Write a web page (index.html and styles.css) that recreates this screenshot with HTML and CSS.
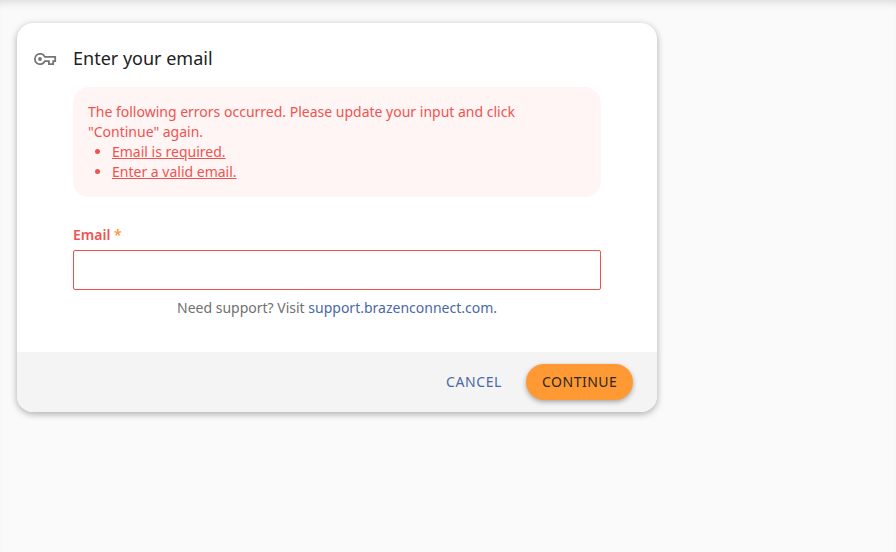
FILE: index.html
```html
<!DOCTYPE html>
<html lang="en">
<head>
<meta charset="utf-8">
<title>Enter your email</title>
<link rel="stylesheet" href="styles.css">
</head>
<body>
<main class="card">
  <header class="card-header">
    <svg class="key" viewBox="0 0 24 24" width="24" height="24"><path d="M11.8 9.9A5.2 5.2 0 1 0 11.8 14.1H15.9V17.1H20.2V14.1H22.2V9.9Z"/><circle cx="7" cy="12" r="1.9"/></svg>
    <h1>Enter your email</h1>
  </header>
  <form class="card-body" novalidate>
    <div class="errors">
      <p>The following errors occurred. Please update your input and click "Continue" again.</p>
      <ul>
        <li><a href="#email">Email is required.</a></li>
        <li><a href="#email">Enter a valid email.</a></li>
      </ul>
    </div>
    <label for="email">Email <span class="required">*</span></label>
    <input id="email" type="email">
    <p class="support">Need support? Visit <a href="#">support.brazenconnect.com.</a></p>
  </form>
  <footer class="card-footer">
    <button class="cancel" type="button">CANCEL</button>
    <button class="continue" type="button">CONTINUE</button>
  </footer>
</main>
</body>
</html>
```
FILE: styles.css
```css
* { box-sizing: border-box; }
body {
  margin: 0;
  padding: 23px 17px;
  min-height: 552px;
  background: #fafafa;
  box-shadow: inset 0 8px 8px -6px rgba(0, 0, 0, .14);
  font: 14px/20px "Noto Sans", sans-serif;
  color: #212121;
}
.card {
  width: 640px;
  height: 389px;
  display: flex;
  flex-direction: column;
  border-radius: 16px;
  background: #fff;
  overflow: hidden;
  box-shadow: 0 2px 7px rgba(0, 0, 0, .32);
}
.card-header { display: flex; align-items: center; gap: 16px; padding: 24px 16px 16px; }
.key { fill: #757575; }
.key path { fill: none; stroke: #757575; stroke-width: 1.8; }
h1 { margin: -2px 0 0; font-size: 18px; line-height: 24px; font-weight: 400; }
.card-body { flex: 1; padding: 0 56px; }
.errors {
  height: 110px;
  padding: 15px;
  border-radius: 16px;
  background: #fff5f4;
  color: #ef5350;
}
.errors p, .errors ul { margin: 0; }
.errors ul { padding-left: 24px; }
.errors a { color: inherit; }
label { display: block; margin: 28px 0 5px; font-weight: 600; color: #ef5350; }
.required { color: #ff9933; }
input {
  display: block;
  width: 100%;
  height: 40px;
  padding: 0 12px;
  border: 1px solid #ef5350;
  border-radius: 2px;
  background: #fff;
  font: inherit;
}
.support { margin: 8px 0 0; text-align: center; color: #707070; }
.support a { color: #4a69a5; text-decoration: none; }
.card-footer {
  display: flex;
  justify-content: flex-end;
  align-items: center;
  gap: 8px;
  height: 60px;
  padding: 0 24px;
  background: #f4f4f4;
}
button {
  height: 36px;
  padding: 0 16px;
  border: 0;
  border-radius: 18px;
  background: none;
  font: 14px/36px "Noto Sans", sans-serif;
  letter-spacing: .5px;
}
.cancel { color: #4a69a5; letter-spacing: .6px; }
.continue {
  width: 107px;
  background: #ff9933;
  color: #2b2622;
  box-shadow: 0 2px 5px rgba(0, 0, 0, .32);
}
```
